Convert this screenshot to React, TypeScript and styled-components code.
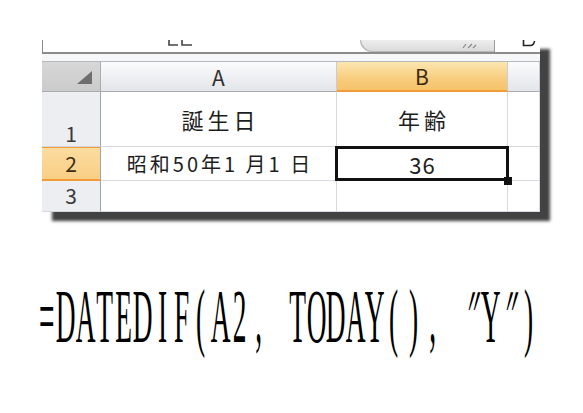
import React from "react";
import styled, { createGlobalStyle } from "styled-components";

const GlobalStyle = createGlobalStyle`
  html, body {
    margin: 0;
    padding: 0;
    background: #ffffff;
  }
  body {
    width: 583px;
    height: 413px;
    overflow: hidden;
  }
`;

const columns = [
  { id: "A", width: 236 },
  { id: "B", width: 171, active: true },
  { id: "", width: 32 },
];

const rows = [
  { id: 1, height: 55, cells: ["誕生日", "年齢", ""], align: "end", size: 22, spacing: 4 },
  { id: 2, height: 34, cells: ["昭和50年1 月1 日", "36", ""], active: true, size: 20, spacing: 3 },
  { id: 3, height: 31, cells: ["", "", ""], size: 18, spacing: 0 },
];

const formula = "=DATEDIF(A2, TODAY(), ″Y″)".split("");

const App = () => {
  return (
    <Page>
      <GlobalStyle />
      <Sheet>
        <Toolbar>
          <NameFragment>
            <svg width="28" height="8" viewBox="0 0 28 8">
              <path d="M2 0 V5 H11 M15 0 V5 H25" stroke="#444" strokeWidth="1.6" fill="none" />
            </svg>
          </NameFragment>
          <FormulaPill>
            <svg width="16" height="6" viewBox="0 0 16 6">
              <path d="M1 5 L4 1 M6 5 L10 1 M11 5 L14 2" stroke="#888" strokeWidth="1.2" fill="none" />
            </svg>
          </FormulaPill>
          <ColFragment>
            <svg width="14" height="7" viewBox="0 0 14 7">
              <path d="M1.5 0 V5.5 H8 Q12 5.5 12.5 1" stroke="#222" strokeWidth="1.6" fill="none" />
            </svg>
          </ColFragment>
        </Toolbar>
        <Gap />
        <Grid>
          <Corner>
            <svg width="15" height="13" viewBox="0 0 15 13">
              <path d="M15 0 L15 13 L0 13 Z" fill="#6e6e6e" />
            </svg>
          </Corner>
          {columns.map((col) => (
            <ColHeader key={col.id || "c"} $active={!!col.active}>
              {col.id}
            </ColHeader>
          ))}
          {rows.map((row) => (
            <React.Fragment key={row.id}>
              <RowHeader $active={!!row.active} $align={row.align || "center"}>
                {row.id}
              </RowHeader>
              {row.cells.map((text, i) => {
                const isValue = row.id === 2 && i === 1;
                return (
                  <Cell key={i} $selected={isValue}>
                    <CellText $size={isValue ? 22 : row.size} $spacing={isValue ? 1 : row.spacing}>
                      {text}
                    </CellText>
                  </Cell>
                );
              })}
            </React.Fragment>
          ))}
        </Grid>
      </Sheet>
      <FormulaLine>
        {formula.map((ch, i) => (
          <Char key={i} $slant={ch === "″"}>
            {ch === " " ? "\u00a0" : ch}
          </Char>
        ))}
      </FormulaLine>
    </Page>
  );
};

export default App;

const Page = styled.div`
  width: 583px;
  height: 413px;
  padding-top: 40px;
  box-sizing: border-box;
  display: flex;
  flex-direction: column;
  background: #ffffff;
`;

const Sheet = styled.div`
  margin-left: 42px;
  width: 498px;
  display: flex;
  flex-direction: column;
  background: #ffffff;
  box-shadow: 10px 9px 3px rgba(45, 45, 45, 0.9);
  font-family: "Noto Sans CJK JP", "Noto Sans", sans-serif;
`;

const Toolbar = styled.div`
  height: 12px;
  display: flex;
  align-items: flex-end;
  border-left: 1px solid #8a8a8a;
  border-bottom: 2px solid #8c8c8c;
  background: #ffffff;
  box-sizing: content-box;
`;

const NameFragment = styled.div`
  margin-left: 124px;
  height: 8px;
  align-self: flex-start;
  display: flex;
`;

const FormulaPill = styled.div`
  margin-left: 165px;
  width: 135px;
  height: 12px;
  box-sizing: border-box;
  display: flex;
  justify-content: flex-end;
  align-items: center;
  padding-right: 16px;
  background: linear-gradient(#eeeeee, #d9d9d9);
  border-right: 1px solid #9a9a9a;
  border-bottom-left-radius: 14px;
  box-shadow: inset 1px -1px 0 #b9b9b9;
`;

const ColFragment = styled.div`
  margin-left: 27px;
  align-self: flex-start;
  display: flex;
`;

const Gap = styled.div`
  height: 7px;
  background: #f6f7f8;
  border-bottom: 1px solid #b6b9bd;
`;

const Grid = styled.div`
  display: grid;
  grid-template-columns: 59px ${columns.map((c) => `${c.width}px`).join(" ")};
  grid-template-rows: 30px ${rows.map((r) => `${r.height}px`).join(" ")};
`;

const Corner = styled.div`
  box-sizing: border-box;
  display: flex;
  align-items: flex-end;
  justify-content: flex-end;
  padding: 0 8px 7px 0;
  background: linear-gradient(#d7d7d7, #cbcbcb);
  border-right: 1px solid #a9adb2;
  border-bottom: 1px solid #a9adb2;
`;

const ColHeader = styled.div<{ $active: boolean }>`
  box-sizing: border-box;
  display: flex;
  align-items: center;
  justify-content: center;
  font-size: 21px;
  color: ${(p) => (p.$active ? "#3a2a10" : "#2f2f2f")};
  background: ${(p) =>
    p.$active
      ? "linear-gradient(#fbe5b0, #f8cd7e 60%, #f6c36a)"
      : "linear-gradient(#fafbfc, #eceef1 60%, #e2e5e9)"};
  border-right: 1px solid #c9cdd3;
  border-bottom: ${(p) => (p.$active ? "2px solid #f29b38" : "1px solid #a9adb2")};
`;

const RowHeader = styled.div<{ $active: boolean; $align: string }>`
  box-sizing: border-box;
  display: flex;
  justify-content: center;
  align-items: ${(p) => (p.$align === "end" ? "flex-end" : "center")};
  font-size: 21px;
  line-height: 1.2;
  color: ${(p) => (p.$active ? "#3a2a10" : "#3a3a3a")};
  background: ${(p) => (p.$active ? "linear-gradient(#fcdca0, #f9cf85)" : "#eceef1")};
  border-right: 1px solid #9fa5ac;
  border-bottom: ${(p) => (p.$active ? "2px solid #f29b38" : "1px solid #d4d8dd")};
  border-top: ${(p) => (p.$active ? "1px solid #f29b38" : "none")};
`;

const Cell = styled.div<{ $selected: boolean }>`
  box-sizing: border-box;
  position: relative;
  display: flex;
  align-items: center;
  justify-content: center;
  border-right: 1px solid #d6dae0;
  border-bottom: 1px solid #d6dae0;
  z-index: ${(p) => (p.$selected ? 2 : 0)};

  &::after {
    content: "";
    display: ${(p) => (p.$selected ? "block" : "none")};
    position: absolute;
    left: -2px;
    top: -1px;
    right: -2px;
    bottom: -1px;
    border: 3px solid #111111;
  }

  &::before {
    content: "";
    display: ${(p) => (p.$selected ? "block" : "none")};
    position: absolute;
    right: -5px;
    bottom: -5px;
    width: 8px;
    height: 8px;
    background: #111111;
    z-index: 3;
  }
`;

const CellText = styled.span<{ $size: number; $spacing: number }>`
  font-size: ${(p) => p.$size}px;
  letter-spacing: ${(p) => p.$spacing}px;
  padding-left: ${(p) => p.$spacing}px;
  color: #1e1e1e;
  white-space: pre;
`;

const FormulaLine = styled.div`
  margin-top: 66px;
  margin-left: 37px;
  height: 76px;
  display: flex;
`;

const Char = styled.span<{ $slant: boolean }>`
  width: 19.3px;
  flex: none;
  display: flex;
  justify-content: center;
  font-family: "Liberation Serif", "Times New Roman", serif;
  font-size: 76px;
  line-height: 76px;
  color: #000000;
  transform: scaleX(0.36) ${(p) => (p.$slant ? "skewX(-28deg)" : "")};
`;
